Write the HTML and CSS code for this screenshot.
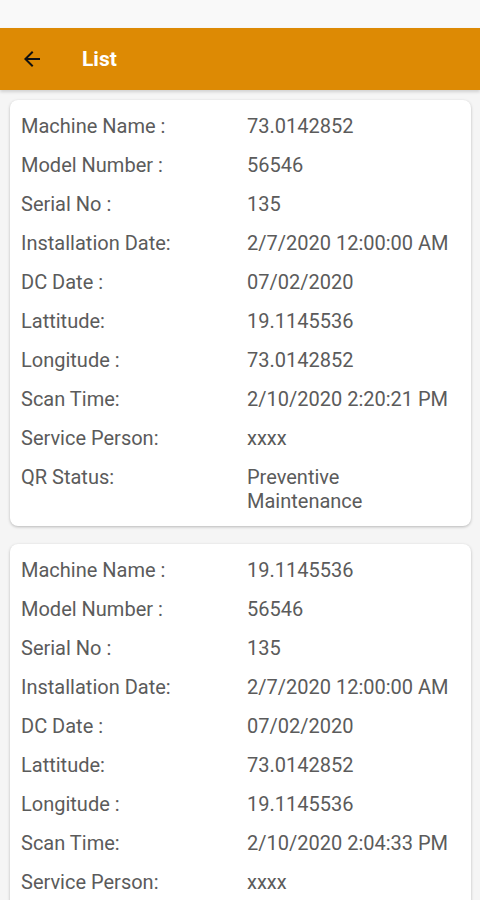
FILE: index.html
```html
<!DOCTYPE html>
<html lang="en">
<head>
    <meta charset="UTF-8">
    <meta name="viewport" content="width=device-width, initial-scale=1.0">
    <title>List</title>
    <link rel="stylesheet" href="styles.css">
</head>
<body>
    <div class="status-bar"></div>
    <div class="app-bar">
        <svg class="back" width="24" height="24" viewBox="0 0 24 24">
            <path d="M20 11H7.83l5.59-5.59L12 4l-8 8 8 8 1.41-1.41L7.83 13H20v-2z" fill="#111"/>
        </svg>
        <span class="title">List</span>
    </div>

    <div class="list">
        <div class="card">
            <div class="row"><span class="label">Machine Name :</span><span class="value">73.0142852</span></div>
            <div class="row"><span class="label">Model Number :</span><span class="value">56546</span></div>
            <div class="row"><span class="label">Serial No :</span><span class="value">135</span></div>
            <div class="row"><span class="label">Installation Date:</span><span class="value">2/7/2020 12:00:00 AM</span></div>
            <div class="row"><span class="label">DC Date :</span><span class="value">07/02/2020</span></div>
            <div class="row"><span class="label">Lattitude:</span><span class="value">19.1145536</span></div>
            <div class="row"><span class="label">Longitude :</span><span class="value">73.0142852</span></div>
            <div class="row"><span class="label">Scan Time:</span><span class="value">2/10/2020 2:20:21 PM</span></div>
            <div class="row"><span class="label">Service Person:</span><span class="value">xxxx</span></div>
            <div class="row"><span class="label">QR Status:</span><span class="value">Preventive<br>Maintenance</span></div>
        </div>

        <div class="card">
            <div class="row"><span class="label">Machine Name :</span><span class="value">19.1145536</span></div>
            <div class="row"><span class="label">Model Number :</span><span class="value">56546</span></div>
            <div class="row"><span class="label">Serial No :</span><span class="value">135</span></div>
            <div class="row"><span class="label">Installation Date:</span><span class="value">2/7/2020 12:00:00 AM</span></div>
            <div class="row"><span class="label">DC Date :</span><span class="value">07/02/2020</span></div>
            <div class="row"><span class="label">Lattitude:</span><span class="value">73.0142852</span></div>
            <div class="row"><span class="label">Longitude :</span><span class="value">19.1145536</span></div>
            <div class="row"><span class="label">Scan Time:</span><span class="value">2/10/2020 2:04:33 PM</span></div>
            <div class="row"><span class="label">Service Person:</span><span class="value">xxxx</span></div>
            <div class="row"><span class="label">QR Status:</span><span class="value">Preventive<br>Maintenance</span></div>
        </div>
    </div>
</body>
</html>
```

FILE: styles.css
```css
body {
    margin: 0;
    font-family: Roboto, "Noto Sans", sans-serif;
    background: #f5f5f5;
    height: 900px;
    overflow: hidden;
}
.status-bar {
    height: 28px;
    background: #f9f9f9;
}
.app-bar {
    height: 62px;
    background: #dd8a04;
    display: flex;
    align-items: center;
    box-shadow: 0 2px 3px rgba(0, 0, 0, 0.15);
}
.back {
    margin-left: 20px;
    width: 24px;
    height: 24px;
}
.title {
    margin-left: 38px;
    color: #fff;
    font-size: 21px;
    font-weight: 700;
}
.list {
    padding: 10px 9px 0 10px;
    display: flex;
    flex-direction: column;
    gap: 18px;
}
.card {
    background: #fff;
    border-radius: 8px;
    box-shadow: 0 1px 3px rgba(0, 0, 0, 0.25);
    padding: 14px 11px 13px 11px;
    display: flex;
    flex-direction: column;
    gap: 15px;
}
.row {
    display: flex;
    font-size: 20px;
    line-height: 24px;
    color: #5b5b5b;
}
.label {
    width: 226px;
    flex-shrink: 0;
}
.value {
    flex: 1;
}
```
